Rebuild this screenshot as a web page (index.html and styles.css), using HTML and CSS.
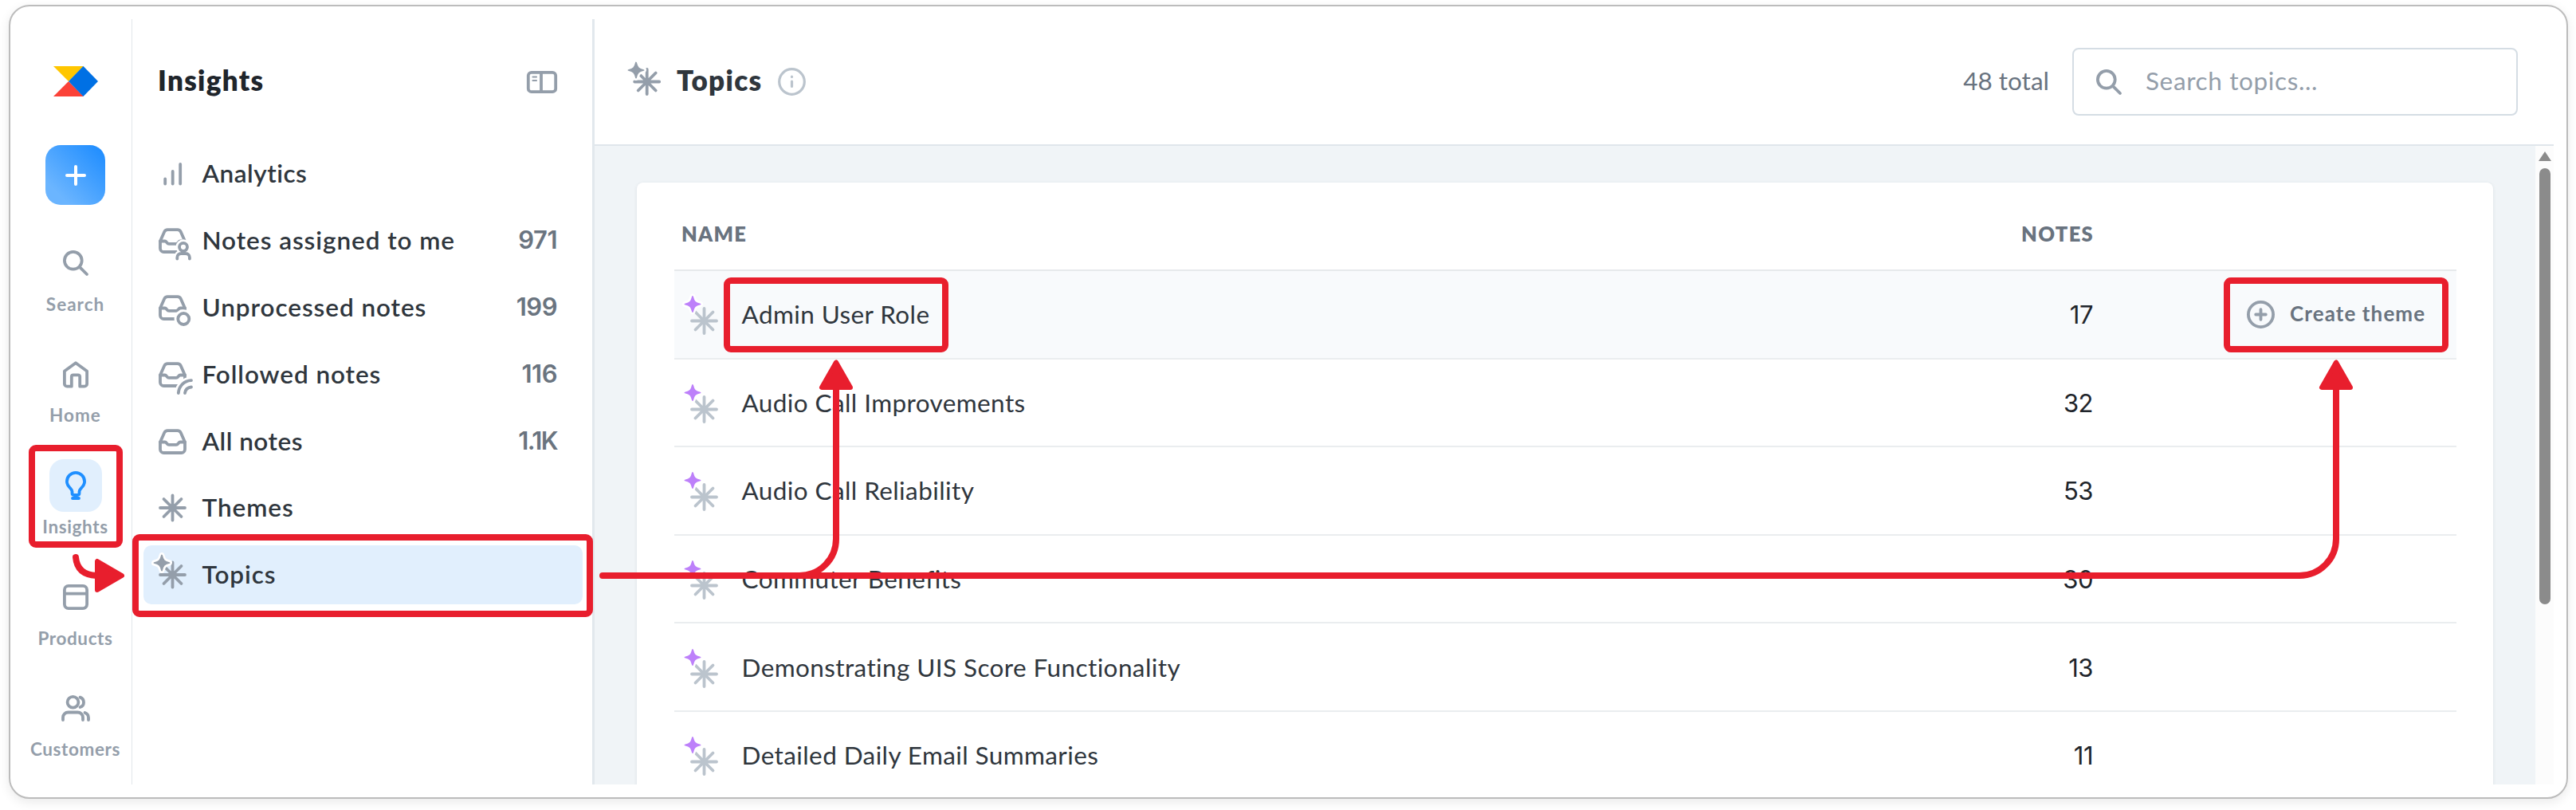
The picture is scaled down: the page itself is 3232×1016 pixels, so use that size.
FILE: index.html
```html
<!DOCTYPE html>
<html lang="en">
<head>
<meta charset="utf-8">
<title>Insights – Topics</title>
<link rel="stylesheet" href="styles.css">
</head>
<body>
<svg class="defs" width="0" height="0" aria-hidden="true">
  <defs>
    <g id="star"><path d="M0-15.5V15.5M-15.5 0H15.5M-11-11L11 11M-11 11L11-11"/></g>
    <path id="spark" d="M0-9.5C1.6-3 3-1.6 9.5 0C3 1.6 1.6 3 0 9.5C-1.6 3-3 1.6-9.5 0C-3-1.6-1.6-3 0-9.5Z"/>
    <g id="tray"><path d="M3 18v9a4.5 4.5 0 0 0 4.5 4.5h22a4.5 4.5 0 0 0 4.5-4.5v-9L28.8 6.3a4.5 4.5 0 0 0-4-2.6H12.2a4.5 4.5 0 0 0-4 2.6L3 18z"/><path d="M3 18h6c2.300 0 2.200 3.300 5 3.300h9c2.800 0 2.700-3.300 5-3.300h6"/></g>
    <g id="glass"><circle cx="12.800" cy="12.800" r="10.900"/><path d="M20.800 20.800L30 30"/></g>
    <g id="topic"><g class="ray"><use href="#star" x="28.500" y="36.500"/></g><use class="halo" href="#spark" x="14" y="15.500"/><use class="gleam" href="#spark" x="14" y="15.500"/></g>
  </defs>
</svg>

<div class="window">
  <nav class="rail">
    <svg class="logo" viewBox="0 0 56 38"><path fill="#ffc600" d="M0 0H38L19 19Z"/><path fill="#fb4238" d="M0 38H38L19 19Z"/><path fill="#0070e4" d="M37.500 0L56 19L37.500 38L19 19Z"/></svg>
    <button class="add"><svg viewBox="0 0 26 26"><path d="M13 2V24M2 13H24"/></svg></button>
    <ul class="rail-list">
      <li><span class="tile"><svg class="line" width="32" height="32" viewBox="0 0 32 32"><use href="#glass"/></svg></span><span class="rail-label wide">Search</span></li>
      <li><span class="tile"><svg class="line" width="32" height="34" viewBox="0 0 32 34"><path d="M1.900 12.500L16 2.200L30.100 12.500V28.500a3.200 3.200 0 0 1-3.200 3.200H21.200V19.500a2.200 2.200 0 0 0-2.200-2.200H13a2.200 2.200 0 0 0-2.200 2.200V31.700H5.100a3.200 3.200 0 0 1-3.200-3.200Z"/></svg></span><span class="rail-label wide">Home</span></li>
      <li class="active"><span class="tile"><svg class="line" width="26" height="36" viewBox="0 0 26 36"><path d="M8.500 27.500V25.500C8.500 21.800 1.900 19.500 1.900 13a11.100 11.100 0 0 1 22.200 0C24.100 19.500 17.500 21.800 17.500 25.500v2c0 1.500-1 2.500-2.500 2.500h-4c-1.500 0-2.500-1-2.500-2.500ZM9 34H17"/></svg></span><span class="rail-label">Insights</span></li>
      <li><span class="tile"><svg class="line" width="32" height="32" viewBox="0 0 32 32"><rect x="1.900" y="1.900" width="28.200" height="28.200" rx="5"/><path d="M2 11.600H30"/></svg></span><span class="rail-label">Products</span></li>
      <li><span class="tile"><svg class="line" width="36" height="33" viewBox="0 0 36 33"><circle cx="14.500" cy="8.800" r="6.900"/><path d="M2 31V28a6.500 6.500 0 0 1 6.500-6.500H20.500a6.500 6.500 0 0 1 6.500 6.500V31M23.500 2.600c6 2.200 6 10.600 0 12.400M29.500 22c3 1.200 4.500 3.300 4.500 6V31"/></svg></span><span class="rail-label">Customers</span></li>
    </ul>
  </nav>

  <aside class="side">
    <header class="side-head">
      <h2>Insights</h2>
      <svg class="line" width="38" height="28" viewBox="0 0 38 28"><rect x="1.800" y="1.800" width="34.400" height="24.400" rx="4"/><path d="M18 2V26"/><path class="thin" d="M7.500 7.500H12M7.500 12H12"/></svg>
    </header>
    <ul class="side-list">
      <li><svg class="line" viewBox="0 -8.500 44 52"><path d="M9.200 24V30M18.700 14.500V30M28.200 5.500V30"/></svg><span class="snug">Analytics</span></li>
      <li><svg class="line" viewBox="0 -8.500 44 52"><use href="#tray"/><path class="cut" d="M27 25.300a5 5 0 1 0 10 0a5 5 0 1 0-10 0M24.600 41v-2.500a5 5 0 0 1 5-5h6a5 5 0 0 1 5 5V41"/><path d="M27 25.300a5 5 0 1 0 10 0a5 5 0 1 0-10 0M24.300 40v-1.500a5 5 0 0 1 5-5h5.600a5 5 0 0 1 5 5V40"/></svg><span>Notes assigned to me</span><b>971</b></li>
      <li><svg class="line" viewBox="0 -8.500 44 52"><use href="#tray"/><circle class="cut" cx="32.300" cy="31.500" r="7.200"/><circle cx="32.300" cy="31.500" r="7"/></svg><span>Unprocessed notes</span><b>199</b></li>
      <li><svg class="line" viewBox="0 -8.500 44 52"><use href="#tray"/><path class="cut" d="M25.800 40.500C26.500 31.500 33 25 42 24.600V40Z"/><path d="M25.800 40.500C26.500 31.500 33 25 42 24.600M34 40.500C34.500 36.500 37.500 33.500 42 33"/></svg><span>Followed notes</span><b>116</b></li>
      <li><svg class="line" viewBox="0 -8.500 44 52"><use href="#tray"/></svg><span class="snug">All notes</span><b class="ones">1.1K</b></li>
      <li><svg class="line" viewBox="0 -8.500 44 52"><use href="#star" x="18.500" y="17.500"/></svg><span>Themes</span></li>
      <li class="active"><svg class="line" viewBox="0 -8.500 44 52"><use href="#star" x="18.500" y="17.500"/><use class="halo" href="#spark" x="5" y="2.500"/><use class="gleam" href="#spark" x="5" y="2.500"/></svg><span>Topics</span></li>
    </ul>
  </aside>

  <main>
    <header class="bar">
      <svg class="line" width="42" height="53" viewBox="0 0 42 53"><use href="#star" x="23.700" y="26.500"/><use class="halo" href="#spark" x="10" y="12"/><use class="gleam" href="#spark" x="10" y="12"/></svg>
      <h1>Topics</h1>
      <svg class="info" width="35" height="35" viewBox="0 0 35 35"><circle cx="17.500" cy="17.500" r="15.800"/><path d="M17.500 17V23.500M17.500 11.200V11.400"/></svg>
      <span class="total">48 total</span>
      <div class="search"><svg class="line" width="32" height="32" viewBox="0 0 32 32"><use href="#glass"/></svg><span>Search topics...</span></div>
    </header>
    <div class="body">
      <section class="card">
        <div class="head"><span>NAME</span><span class="num">NOTES</span></div>
        <div class="row hover"><div class="name"><svg viewBox="0 0 48 56"><use href="#topic"/></svg><span>Admin User Role</span></div><div class="num">17</div>
          <div class="create"><svg class="line" width="35" height="35" viewBox="0 0 35 35"><circle cx="17.500" cy="17.500" r="15.600"/><path d="M17.500 11.200V23.800M11.200 17.500H23.800"/></svg><span>Create theme</span></div></div>
        <div class="row"><div class="name"><svg viewBox="0 0 48 56"><use href="#topic"/></svg><span>Audio Call Improvements</span></div><div class="num">32</div></div>
        <div class="row"><div class="name"><svg viewBox="0 0 48 56"><use href="#topic"/></svg><span>Audio Call Reliability</span></div><div class="num">53</div></div>
        <div class="row"><div class="name"><svg viewBox="0 0 48 56"><use href="#topic"/></svg><span>Commuter Benefits</span></div><div class="num">30</div></div>
        <div class="row"><div class="name"><svg viewBox="0 0 48 56"><use href="#topic"/></svg><span>Demonstrating UIS Score Functionality</span></div><div class="num">13</div></div>
        <div class="row"><div class="name"><svg viewBox="0 0 48 56"><use href="#topic"/></svg><span>Detailed Daily Email Summaries</span></div><div class="num">11</div></div>
      </section>
      <div class="scroll"><i class="up"></i><i class="thumb"></i></div>
    </div>
  </main>
</div>

<svg class="callouts" width="3232" height="1016" viewBox="0 0 3232 1016">
  <g class="mark">
    <rect x="40" y="562" width="110" height="121" rx="5"/>
    <rect x="170" y="674" width="570" height="96" rx="5"/>
    <rect x="912" y="352" width="274" height="86" rx="5"/>
    <rect x="2794" y="352" width="274" height="86" rx="5"/>
    <path d="M95 699Q97 721 121 722"/>
    <path d="M756 722H2885A46 46 0 0 0 2931 676V486"/>
    <path d="M1003 722A46 46 0 0 0 1049 676V486"/>
  </g>
  <g class="tip">
    <path d="M122 704V740L153 722Z"/>
    <path d="M1031 486H1067L1049 454.500Z"/>
    <path d="M2913 486H2949L2931 454.500Z"/>
  </g>
</svg>
</body>
</html>
```
FILE: styles.css
```css
* { box-sizing: border-box; }
body { margin: 0; width: 3232px; height: 1016px; overflow: hidden; background: #fff; padding: 6px 10px 0 11px; font-family: Lato, "Liberation Sans", sans-serif; color: #2f363d; }
ul { list-style: none; margin: 0; padding: 0; }
h1, h2 { margin: 0; }
svg { display: block; flex: none; overflow: visible; }
.defs { position: absolute; }

.window { display: flex; height: 996px; padding: 16px 16px 16px 0; border: 2px solid #bcbcbc; border-radius: 26px; box-shadow: 0 4px 14px rgba(0, 0, 0, .09); }

.line { fill: none; stroke: #949eaa; stroke-width: 3.8px; stroke-linecap: round; stroke-linejoin: round; }
.thin { stroke-width: 2.2px; }
.cut { fill: #fff; stroke: #fff; stroke-width: 9px; }
.halo { fill: #fff; stroke: #fff; stroke-width: 7px; stroke-linejoin: round; }
.gleam { fill: #949eaa; stroke: #949eaa; stroke-width: 1.8px; stroke-linejoin: round; }

.rail { width: 153px; display: flex; flex-direction: column; align-items: center; border-right: 1px solid #e3e7ea; padding: 59px 0 0 11px; }
.logo { width: 56px; height: 38px; }
.add { width: 75px; height: 75px; margin: 61px 0 40px; padding: 0; border: 0; border-radius: 19px; background: linear-gradient(45deg, #6bb5ff 20%, #1f8dff 95%); display: grid; place-items: center; }
.add svg { width: 26px; height: 26px; fill: none; stroke: #fff; stroke-width: 4px; stroke-linecap: round; }
.rail-list { display: flex; flex-direction: column; gap: 41.2px; align-self: stretch; }
.rail-list li { display: flex; flex-direction: column; align-items: center; gap: 4.5px; }
.tile { width: 66px; height: 66px; border-radius: 18px; display: grid; place-items: center; }
.active .tile { background: #e1effd; }
.active .tile .line { stroke: #1f8fff; }
.rail-label { font-size: 22.5px; font-weight: 700; line-height: 28px; letter-spacing: .6px; color: #949eaa; }
.rail-label.wide { letter-spacing: 1px; }

.side { width: 580px; border-right: 3px solid #e2e8ed; }
.side-head { height: 157px; display: flex; align-items: center; justify-content: space-between; padding: 0 44px 0 32px; }
.side-head h2 { font-size: 35px; font-weight: 800; line-height: 40px; letter-spacing: 1.3px; padding-bottom: 6px; color: #1f252b; }
.side-head svg { margin-top: 1px; }
.side-list { display: flex; flex-direction: column; gap: 9.9px; padding: 0 12px 0 14px; }
.side-list li { height: 74px; display: flex; align-items: center; padding: 0 32px 0 18px; border-radius: 10px; font-size: 31.5px; line-height: 40px; font-weight: 600; letter-spacing: .93px; }
.side-list svg { width: 44px; height: 52px; margin-right: 11.5px; }
.side-list span, .side-list b { padding-bottom: 2px; }
.side-list .snug { letter-spacing: .5px; }
.side-list b { margin-left: auto; font: 600 31px/40px Inter, sans-serif; letter-spacing: -.5px; color: #6a747f; }
.side-list .ones { letter-spacing: -1.6px; }
.side-list .active { background: #e1effd; }

main { flex: 1; display: flex; flex-direction: column; min-width: 0; }
.bar { height: 159px; display: flex; align-items: center; border-bottom: 2px solid #e0e6eb; padding: 0 45px 0 42px; font-size: 31.5px; line-height: 40px; }
.bar h1 { font-size: 35px; font-weight: 800; line-height: 40px; letter-spacing: 1.3px; margin: 0 20px 0 19px; padding-bottom: 6px; }
.info { fill: none; stroke: #bbc4cd; stroke-width: 3.2px; stroke-linecap: round; }
.total { margin-left: auto; margin-right: 29px; color: #69737f; padding-bottom: 4px; }
.search { width: 559px; height: 85px; display: flex; align-items: center; gap: 30px; padding-left: 28px; border: 2px solid #d5dde4; border-radius: 8px; color: #949eaa; }
.search span { letter-spacing: .63px; padding-bottom: 4px; }

.body { flex: 1; min-height: 0; display: flex; background: #f0f4f7; overflow: hidden; }
.card { width: 2329px; height: 900px; margin: 46px 53px 0; padding: 18px 46px 0 47px; background: #fff; border-radius: 8px; box-shadow: 0 1px 4px rgba(30, 50, 70, .1); }
.head, .row { display: grid; grid-template-columns: 1481px 300px 455px; align-items: center; }
.head { height: 93px; border-bottom: 2px solid #e6e9ec; font-size: 25.5px; font-weight: 800; letter-spacing: 1.3px; color: #69737f; }
.head span:first-child { padding-left: 9px; }
.num { text-align: right; }
.row { height: 110.6px; border-bottom: 2px solid #eaedef; font-size: 31.5px; }
.row .num { font: 400 31px/40px Inter, sans-serif; letter-spacing: -.5px; color: #1f252b; padding: 2px 1px 0 0; }
.hover { background: #f8fafc; }
.name { display: flex; align-items: center; letter-spacing: .4px; line-height: 40px; }
.name svg { width: 48px; height: 56px; margin: 0 27.5px 0 9px; fill: none; }
.ray { stroke: #bbc4cd; stroke-width: 3.8px; stroke-linecap: round; }
#topic .gleam { fill: #bd80fa; stroke: #bd80fa; }
.create { display: flex; align-items: center; gap: 19px; padding-left: 192px; color: #69737f; font-size: 26px; font-weight: 700; letter-spacing: 1.1px; white-space: nowrap; }
.create span { padding-bottom: 3px; }

.scroll { width: 23px; flex: none; display: flex; flex-direction: column; align-items: center; padding-top: 7px; background: #fcfcfc; }
.up { width: 0; height: 0; border: 8px solid transparent; border-top: 0; border-bottom: 12px solid #8b8b8b; }
.thumb { width: 14px; height: 547px; margin-top: 9px; border-radius: 7px; background: #8b8b8b; }

/* annotations drawn over the whole window */
.callouts { position: absolute; left: 0; top: 0; }
.mark { fill: none; stroke: #e81e2d; stroke-width: 8px; stroke-linecap: round; }
.tip { fill: #e81e2d; stroke: #e81e2d; stroke-width: 6px; stroke-linejoin: round; }
```
